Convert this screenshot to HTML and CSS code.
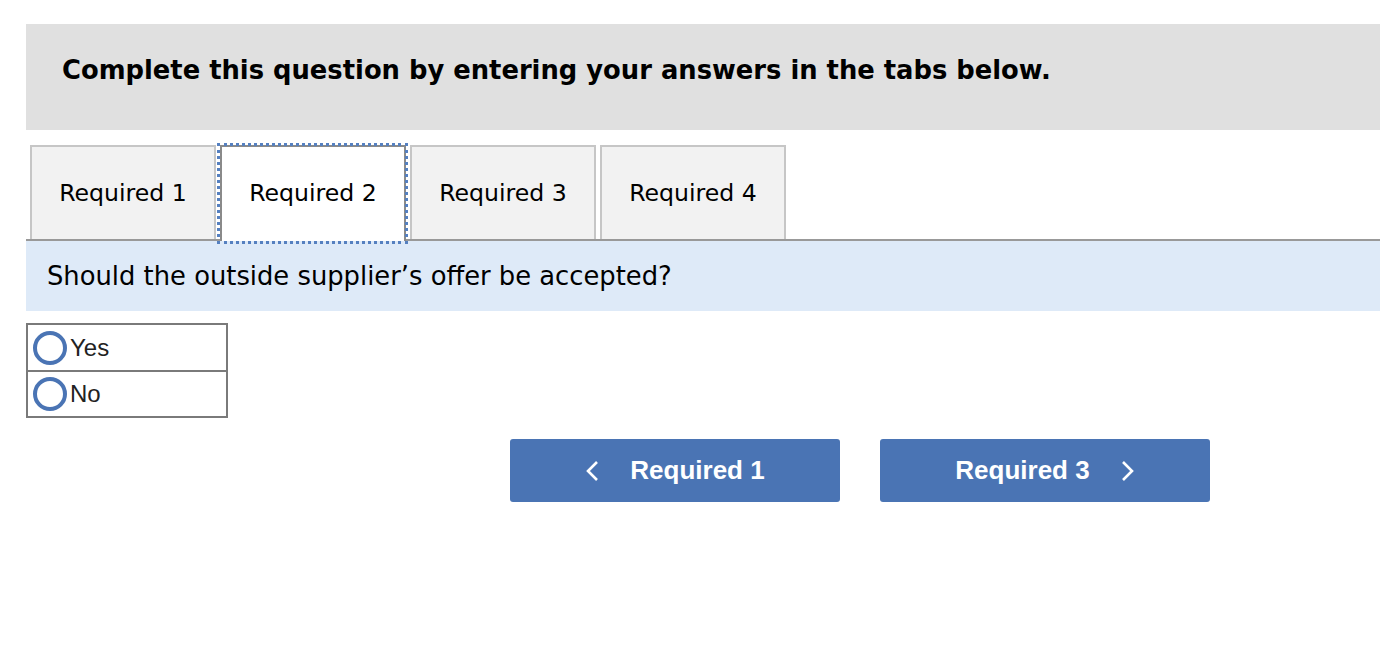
FILE: index.html
```html
<!DOCTYPE html>
<html>
<head>
<meta charset="utf-8">
<link rel="stylesheet" href="styles.css">
</head>
<body>
<div class="page">
  <div class="header">Complete this question by entering your answers in the tabs below.</div>
  <div class="tabs">
    <div class="tab">Required 1</div>
    <div class="tab active">Required 2</div>
    <div class="tab">Required 3</div>
    <div class="tab">Required 4</div>
  </div>
  <div class="question">Should the outside supplier’s offer be accepted?</div>
  <div class="choices">
    <div class="choice"><span class="radio"></span><span class="label">Yes</span></div>
    <div class="choice"><span class="radio"></span><span class="label">No</span></div>
  </div>
  <div class="nav">
    <div class="btn"><svg class="chev" width="14" height="22" viewBox="0 0 14 22"><path d="M12 2 L3 11 L12 20" fill="none" stroke="#fff" stroke-width="2.6"/></svg><span>Required 1</span></div>
    <div class="btn next"><span>Required 3</span><svg class="chev" width="14" height="22" viewBox="0 0 14 22"><path d="M2 2 L11 11 L2 20" fill="none" stroke="#fff" stroke-width="2.6"/></svg></div>
  </div>
</div>
</body>
</html>
```
FILE: styles.css
```css
html, body { margin: 0; padding: 0; background: #fff; }
.page { padding: 24px 0 0 26px; font-family: "DejaVu Sans", Verdana, sans-serif; color: #000; }
.header {
  box-sizing: border-box; background: #e0e0e0; height: 106px;
  padding: 31px 0 0 36px; font-weight: bold; font-size: 25.8px; line-height: 30px;
}
.tabs {
  margin-top: 15px; height: 94px; display: flex; gap: 4px; padding-left: 4px;
  border-bottom: 2px solid #999;
}
.tab {
  box-sizing: border-box; width: 186px; height: 94px; background: #f2f2f2;
  border: 2px solid #c6c6c6; border-bottom: none;
  display: flex; align-items: center; justify-content: center; font-size: 23.6px;
}
.tab.active {
  background: #fff; border-color: #8a8a8a; height: 96px; padding-bottom: 2px;
  position: relative; z-index: 1;
}
.tab.active::after {
  content: ""; position: absolute; top: -4px; left: -5px; right: -4px; bottom: -3px;
  border: 3px dotted #5580c0;
}
.question {
  background: #deeaf8; height: 70px; display: flex; align-items: center;
  padding-left: 21px; font-size: 25.8px;
}
.choices {
  margin-top: 12px; width: 202px; box-sizing: border-box; border: 2px solid #7a7a7a;
  font-family: "Liberation Sans", Arial, sans-serif; font-size: 24px; color: #222;
}
.choice { height: 45px; display: flex; align-items: center; padding-left: 5px; }
.choice + .choice { height: 44px; border-top: 2px solid #7a7a7a; }
.radio {
  width: 26px; height: 26px; border: 4px solid #4a74b4; border-radius: 50%; margin-right: 3px;
  flex: none; background: #fff;
}
.nav { display: flex; gap: 40px; margin-top: 21px; margin-left: 484px; }
.btn {
  width: 330px; height: 63px; background: #4a74b4; border-radius: 3px; color: #fff;
  display: flex; align-items: center; justify-content: center; gap: 31px;
  font-family: "Liberation Sans", Arial, sans-serif; font-weight: bold; font-size: 26px;
}
.chev { display: block; }
```
